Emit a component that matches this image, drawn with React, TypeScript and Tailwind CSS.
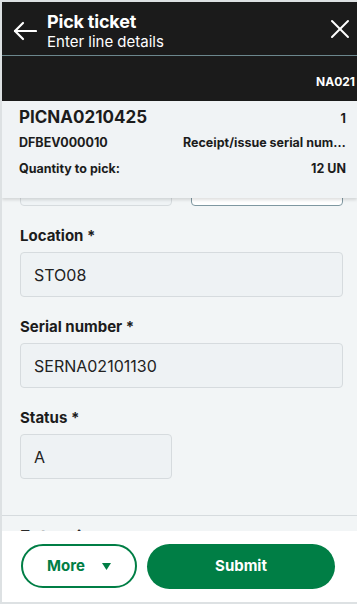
const font = { fontFamily: "Inter, 'Noto Sans', sans-serif" };

const fields = [
  { label: "Location *", value: "STO08", wide: true },
  { label: "Serial number *", value: "SERNA02101130", wide: true },
  { label: "Status *", value: "A", wide: false },
];

export default function App() {
  return (
    <div
      style={font}
      className="w-[357px] h-[604px] flex flex-col overflow-hidden bg-[#f2f5f6] border-l-2 border-t-2 border-b-2 border-[#dde1e3] text-[#1c1c1c]"
    >
      <Header />
      <div className="h-[45px] shrink-0 bg-[#1b1b1b] flex justify-end items-end pb-[11px] pr-[2px]">
        <span className="text-white text-[12px] font-bold leading-4">NA021</span>
      </div>
      <SummaryCard />
      <div className="flex-1 min-h-0 overflow-hidden">
        <PartialRow />
        <div className="px-[18px]">
          {fields.map((f) => (
            <Field key={f.label} {...f} />
          ))}
        </div>
        <div className="mt-[36px] border-t border-[#d6dbde] px-[18px] pt-[10px]">
          <div className="text-[17px] font-bold leading-[22px] text-[#2a2a2a]">Extensions</div>
        </div>
      </div>
      <Footer />
    </div>
  );
}

function Header() {
  return (
    <div className="shrink-0 bg-[#1b1b1b] border-b border-[#6c878d]">
      <div className="h-[53px] flex items-center pt-[4px] pl-[11px] pr-[7px]">
        <svg width="24" height="20" viewBox="0 0 24 20" fill="none" stroke="white" strokeWidth="2.2" strokeLinecap="round" strokeLinejoin="round">
          <path d="M23 10H2" />
          <path d="M10 2L2 10L10 18" />
        </svg>
        <div className="ml-[10px] flex flex-col">
          <span className="text-white text-[18px] font-bold leading-[22px] tracking-[-0.2px]">Pick ticket</span>
          <span className="text-white text-[15px] leading-[18px]">Enter line details</span>
        </div>
        <svg className="ml-auto -mt-[4px]" width="20" height="20" viewBox="0 0 20 20" fill="none" stroke="white" strokeWidth="2" strokeLinecap="round">
          <path d="M2 2L18 18" />
          <path d="M18 2L2 18" />
        </svg>
      </div>
    </div>
  );
}

function SummaryCard() {
  return (
    <div className="relative z-10 shrink-0 h-[97px] bg-[#f0f3f5] pl-[17px] pr-[11px] pt-[6px] shadow-[0_2px_3px_rgba(0,0,0,0.13)]">
      <div className="flex justify-between items-baseline h-[20px]">
        <span className="text-[17px] font-bold leading-5">PICNA0210425</span>
        <span className="text-[12.5px] font-bold leading-4">1</span>
      </div>
      <div className="mt-[8px] flex justify-between gap-4 text-[12.5px] font-bold leading-4">
        <span>DFBEV000010</span>
        <span className="truncate w-[163px] text-right">Receipt/issue serial number</span>
      </div>
      <div className="mt-[10px] flex justify-between text-[12.5px] font-bold leading-4">
        <span>Quantity to pick:</span>
        <span>12 UN</span>
      </div>
    </div>
  );
}

function PartialRow() {
  return (
    <div className="h-[8px] overflow-hidden flex items-end px-[18px] gap-[19px]">
      <div className="w-[152px] h-[45px] shrink-0 rounded-[4px] border border-[#d6dbde] bg-[#eff3f5]" />
      <div className="w-[152px] h-[45px] shrink-0 rounded-[4px] border border-[#7f98a1] bg-white" />
    </div>
  );
}

function Field({ label, value, wide }: { label: string; value: string; wide: boolean }) {
  return (
    <div className="pt-[20px]">
      <div className="text-[15px] font-bold leading-5">{label}</div>
      <div
        className={`mt-[6px] h-[45px] flex items-center px-[13px] rounded-[4px] border border-[#d6dbde] bg-[#eef2f4] text-[16px] text-[#222] ${
          wide ? "w-[323px]" : "w-[152px]"
        }`}
      >
        {value}
      </div>
    </div>
  );
}

function Footer() {
  return (
    <div className="shrink-0 h-[71px] bg-white flex items-start pt-[13px] pl-[19px] gap-[10px]">
      <button className="w-[116px] h-[44px] rounded-full border-2 border-[#007e45] flex items-center justify-center gap-[17px] text-[#007e45] text-[15px] font-bold">
        <span>More</span>
        <svg width="9" height="7" viewBox="0 0 9 7" fill="#007e45">
          <path d="M0 0H9L4.5 7Z" />
        </svg>
      </button>
      <button className="w-[188px] h-[45px] rounded-full bg-[#007e45] text-white text-[15px] font-bold">Submit</button>
    </div>
  );
}
